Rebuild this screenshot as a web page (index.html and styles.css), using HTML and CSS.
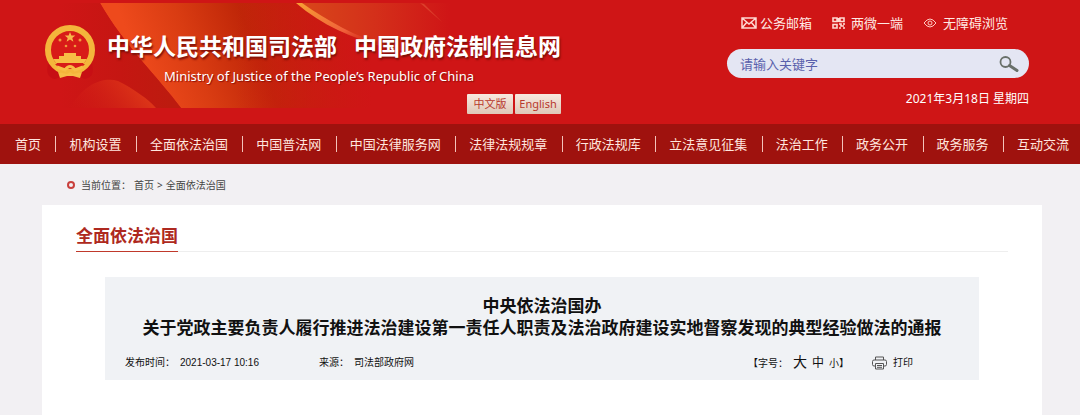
FILE: index.html
```html
<!DOCTYPE html>
<html lang="zh-CN">
<head>
    <meta charset="UTF-8">
    <meta name="viewport" content="width=device-width, initial-scale=1.0">
    <title>中华人民共和国司法部 中国政府法制信息网</title>
    <link rel="stylesheet" href="styles.css">
</head>
<body>

    <header class="header">
        <!-- 飘带背景 -->
        <svg class="banner" viewBox="0 0 390 105" aria-hidden="true">
            <defs>
                <linearGradient id="glow" gradientUnits="userSpaceOnUse" x1="78" y1="58" x2="330" y2="-40">
                    <stop offset="0" stop-color="#ee4a1c"/>
                    <stop offset="0.2" stop-color="#d93c12"/>
                    <stop offset="0.42" stop-color="#bf2608"/>
                    <stop offset="0.7" stop-color="#c4200c"/>
                    <stop offset="1" stop-color="#cf1516"/>
                </linearGradient>
                <linearGradient id="fade" x1="0" y1="0" x2="1" y2="0">
                    <stop offset="0.45" stop-color="#cf1516" stop-opacity="0"/>
                    <stop offset="0.8" stop-color="#cf1516"/>
                </linearGradient>
                <linearGradient id="fold" gradientUnits="userSpaceOnUse" x1="0" y1="0" x2="110" y2="0">
                    <stop offset="0" stop-color="#cf1516"/>
                    <stop offset="0.55" stop-color="#c51612"/>
                    <stop offset="1" stop-color="#bd1b0f"/>
                </linearGradient>
                <linearGradient id="low" gradientUnits="userSpaceOnUse" x1="0" y1="105" x2="60" y2="60">
                    <stop offset="0" stop-color="#cf1516" stop-opacity="0"/>
                    <stop offset="1" stop-color="#dc3418"/>
                </linearGradient>
                <linearGradient id="top" gradientUnits="userSpaceOnUse" x1="237" y1="0" x2="390" y2="0">
                    <stop offset="0" stop-color="#d8481a"/>
                    <stop offset="0.5" stop-color="#d4301a"/>
                    <stop offset="1" stop-color="#cf1516"/>
                </linearGradient>
                <linearGradient id="line" x1="0" y1="0" x2="1" y2="1">
                    <stop offset="0" stop-color="#f7a034"/>
                    <stop offset="0.6" stop-color="#f0603a"/>
                    <stop offset="1" stop-color="#cf1516" stop-opacity="0"/>
                </linearGradient>
            </defs>
            <path d="M40 0H390V105H121C98 74 64 42 40 0Z" fill="url(#glow)"/>
            <path d="M40 0C64 42 98 74 121 105H0V0Z" fill="url(#fold)"/>
            <path d="M10 105C24 80 44 74 58 78C74 86 88 96 96 105Z" fill="url(#low)"/>
            <rect width="390" height="105" fill="url(#fade)"/>
            <path d="M237 0H390V52C350 52 290 44 237 0Z" fill="url(#top)"/>
            <path d="M236 0H242C268 18 296 34 325 42C292 36 262 22 236 0Z" fill="url(#line)"/>
            <path d="M360 0L364 1L382 19Z" fill="#dc3f2c"/>
        </svg>

        <div class="brand">
            <svg class="emblem" viewBox="0 0 54 60" aria-hidden="true">
                <path d="M5 40C3 48 5 54 12 55L20 52H34L42 55C50 53 51 48 49 40Z" fill="#c70f14"/>
                <circle cx="27" cy="26" r="22" fill="#d81b18" stroke="#f4b63b" stroke-width="6"/>
                <path d="M27 8l1.400 3.600h3.900l-3 2.400 1.100 3.800-3.400-2.200-3.400 2.200 1.100-3.800-3-2.400h3.900z" fill="#f7b64a"/>
                <g fill="#f09a3d">
                    <circle cx="17" cy="16" r="1.500"/>
                    <circle cx="37" cy="16" r="1.500"/>
                    <circle cx="23" cy="22" r="1.300"/>
                    <circle cx="32" cy="22" r="1.300"/>
                </g>
                <path d="M21 29H33V32H38V35H44L41 39H13L10 35H16V32H21Z" fill="#f7bd45"/>
                <path d="M12 40H42L37 45Q27 40 17 45Z" fill="#d81b18"/>
                <path d="M14 43L22 46Q27 39 32 46L40 43" fill="none" stroke="#f7bd45" stroke-width="3"/>
                <path d="M15 48L24 50L27 48L30 50L39 48L37 54L30 52H24L17 54Z" fill="#f7bd45"/>
            </svg>
            <div class="brand-text">
                <h1><span>中华人民共和国司法部</span><span>中国政府法制信息网</span></h1>
                <p class="subtitle">Ministry of Justice of the People’s Republic of China</p>
                <div class="lang">
                    <button type="button">中文版</button>
                    <button type="button">English</button>
                </div>
            </div>
        </div>

        <div class="tools">
            <div class="quick">
                <a href="#">
                    <svg width="16" height="12" viewBox="0 0 16 12" fill="none" stroke="#ffd9d2" stroke-width="1.500"><path d="M1 1H15V11H1ZM1 1L8 7L15 1M1 11L6 5M15 11L10 5"/></svg>
                    公务邮箱
                </a>
                <a href="#" class="wide">
                    <svg width="13" height="12" viewBox="0 0 13 12" fill="none" stroke="#ffd9d2" stroke-width="1.600"><path d="M1 1H5V4.500H1ZM8 1H12V4.500H8ZM1 7.500H5V11H1ZM7 7H9V9H12M12 6V8M7 11H9M11 11H13M6.500 1V5"/></svg>
                    两微一端
                </a>
                <a href="#" class="wide">
                    <svg width="14" height="10" viewBox="0 0 14 10" fill="none" stroke="#ffc9c0"><path d="M1 5Q7 -3 13 5Q7 13 1 5Z"/><circle cx="7" cy="5" r="2"/></svg>
                    无障碍浏览
                </a>
            </div>
            <form class="search">
                <input type="text" placeholder="请输入关键字" aria-label="请输入关键字">
                <button type="submit" aria-label="搜索">
                    <svg width="20" height="16" viewBox="0 0 20 16" fill="none" stroke="#69706a"><circle cx="6.500" cy="6" r="5" stroke-width="1.800"/><path d="M10.500 9.500L18 14.500" stroke-width="3" stroke-linecap="round"/></svg>
                </button>
            </form>
            <p class="date">2021年3月18日 星期四</p>
        </div>
    </header>

    <nav class="nav">
        <ul>
            <li><a href="#">首页</a></li>
            <li><a href="#">机构设置</a></li>
            <li><a href="#">全面依法治国</a></li>
            <li><a href="#">中国普法网</a></li>
            <li><a href="#">中国法律服务网</a></li>
            <li><a href="#">法律法规规章</a></li>
            <li><a href="#">行政法规库</a></li>
            <li><a href="#">立法意见征集</a></li>
            <li><a href="#">法治工作</a></li>
            <li><a href="#">政务公开</a></li>
            <li><a href="#">政务服务</a></li>
            <li><a href="#">互动交流</a></li>
        </ul>
    </nav>

    <div class="crumbs">
        <span class="dot"></span>
        <span>当前位置：</span>
        <a href="#">首页</a>
        <span>&gt;</span>
        <a href="#">全面依法治国</a>
    </div>

    <main class="content">
        <div class="section-title">
            <h2>全面依法治国</h2>
        </div>

        <article class="article">
            <h3>中央依法治国办<br>关于党政主要负责人履行推进法治建设第一责任人职责及法治政府建设实地督察发现的典型经验做法的通报</h3>
            <div class="meta">
                <span class="time"><span>发布时间：</span><span>2021-03-17 10:16</span></span>
                <span class="source"><span>来源：</span><span>司法部政府网</span></span>
                <div class="font-size">
                    <span>【字号：</span>
                    <button type="button" class="large">大</button>
                    <button type="button" class="medium">中</button>
                    <button type="button">小</button><span>】</span>
                </div>
                <button type="button" class="print">
                    <svg width="15" height="14" viewBox="0 0 15 14" fill="none" stroke="#555"><path d="M3.500 4V1H11.500V4M3.500 10H2Q.5 10 .5 8.500V5.500Q.5 4 2 4H13Q14.500 4 14.500 5.500V8.500Q14.500 10 13 10H11.500M3.500 7.500H11.500V13H3.500ZM5 9.500H10M5 11.300H10"/></svg>
                    打印
                </button>
            </div>
        </article>
    </main>

</body>
</html>
```

FILE: styles.css
```css
/* 全局样式 */
* {
    box-sizing: border-box;
}

body {
    margin: 0;
    min-height: 100vh;
    display: flex;
    flex-direction: column;
    background-color: #f2f0f3;
    color: #111;
    font-family: "Noto Sans", "Noto Sans CJK SC", sans-serif;
    font-size: 10px;
}

h1, h2, h3, p, ul {
    margin: 0;
    padding: 0;
}

a {
    color: inherit;
    text-decoration: none;
}

button {
    padding: 0;
    border: none;
    background: none;
    color: inherit;
    font: inherit;
    cursor: pointer;
}

/* 页头 */
.header {
    position: relative;
    display: flex;
    justify-content: space-between;
    padding: 0 51px 10px 43px;
    background-color: #cf1516;
    color: #fff;
}

.banner {
    position: absolute;
    top: 3px;
    left: 60px;
    width: 390px;
    height: 105px;
}

.brand {
    position: relative;
    display: flex;
    gap: 10px;
}

.emblem {
    width: 54px;
    height: 60px;
    margin-top: 24px;
}

.brand-text {
    padding-top: 32px;
}

h1 {
    display: flex;
    gap: 17px;
    font-family: "Liberation Serif", "Noto Sans CJK SC", serif;
    font-size: 23px;
    line-height: 32px;
    text-shadow: 1px 2px 2px #7d1008;
}

.subtitle {
    padding-left: 57px;
    font-size: 13px;
    line-height: 24px;
    text-shadow: 1px 1px 1px #8d1008;
}

.lang {
    display: flex;
    justify-content: flex-end;
    gap: 2px;
    margin-top: 6px;
}

.lang button {
    width: 46px;
    height: 20px;
    border-radius: 1px;
    background: linear-gradient(#f8e9df, #dfc8b8);
    color: #b8382c;
    font-size: 11px;
    line-height: 20px;
}

.tools {
    width: 302px;
    padding-top: 13px;
}

.quick {
    display: flex;
    gap: 20px;
    padding-left: 14px;
    font-size: 13px;
    line-height: 20px;
    color: #ffe9e4;
}

.quick a {
    display: flex;
    align-items: center;
    gap: 3px;
}

.quick .wide {
    gap: 6px;
}

.search {
    display: flex;
    align-items: center;
    height: 29px;
    margin-top: 16px;
    padding: 0 10px 0 13px;
    border-radius: 15px;
    background-color: #e4e6f3;
}

.search input {
    flex: 1;
    min-width: 0;
    padding: 0;
    border: none;
    outline: none;
    background: none;
    font: inherit;
    font-size: 13px;
}

.search input::placeholder {
    color: #5a61ac;
}

.search button {
    display: flex;
}

.date {
    margin-top: 11px;
    font-size: 12px;
    line-height: 20px;
    text-align: right;
}

/* 导航 */
.nav {
    padding: 0 11px 0 15px;
    background-color: #9f120e;
    color: #ffe6df;
}

.nav ul {
    display: flex;
    justify-content: space-between;
    list-style: none;
}

.nav li {
    display: flex;
    align-items: center;
    font-size: 13px;
    line-height: 40px;
    white-space: nowrap;
}

.nav li + li::before {
    content: "";
    width: 1px;
    height: 16px;
    margin-right: 13px;
    background-color: #f3c3bb;
}

/* 当前位置 */
.crumbs {
    display: flex;
    align-items: center;
    gap: 3px;
    height: 41px;
    padding-left: 67px;
    color: #444;
}

.dot {
    width: 8px;
    height: 8px;
    margin-right: 3px;
    border: 2px solid #c9403c;
    border-radius: 50%;
}

/* 正文 */
.content {
    flex: 1;
    margin: 0 38px 0 42px;
    padding: 16px 34px 36px;
    background-color: #fff;
}

.section-title {
    display: flex;
    border-bottom: 1px solid #eee;
}

h2 {
    margin-bottom: -1px;
    border-bottom: 1px solid #c0392b;
    color: #ae2920;
    font-size: 17px;
    line-height: 30px;
}

.article {
    margin: 25px 29px 0;
    padding: 18px 20px 3px;
    background-color: #f0f2f5;
}

h3 {
    margin: 0 -20px;
    font-size: 17px;
    line-height: 22px;
    text-align: center;
}

.meta {
    display: flex;
    align-items: center;
    margin-top: 10px;
    font-family: "Liberation Sans", "Noto Sans CJK SC", sans-serif;
    line-height: 26px;
}

.time,
.source {
    display: flex;
    gap: 5px;
}

.time {
    margin-right: 60px;
}

.font-size {
    display: flex;
    align-items: baseline;
    gap: 5px;
    margin-left: auto;
}

.font-size .large {
    font-size: 14px;
}

.font-size .medium {
    font-size: 12px;
}

.font-size button + span {
    margin-left: -5px;
}

.print {
    display: flex;
    align-items: center;
    gap: 6px;
    margin: 0 46px 0 23px;
}
```
